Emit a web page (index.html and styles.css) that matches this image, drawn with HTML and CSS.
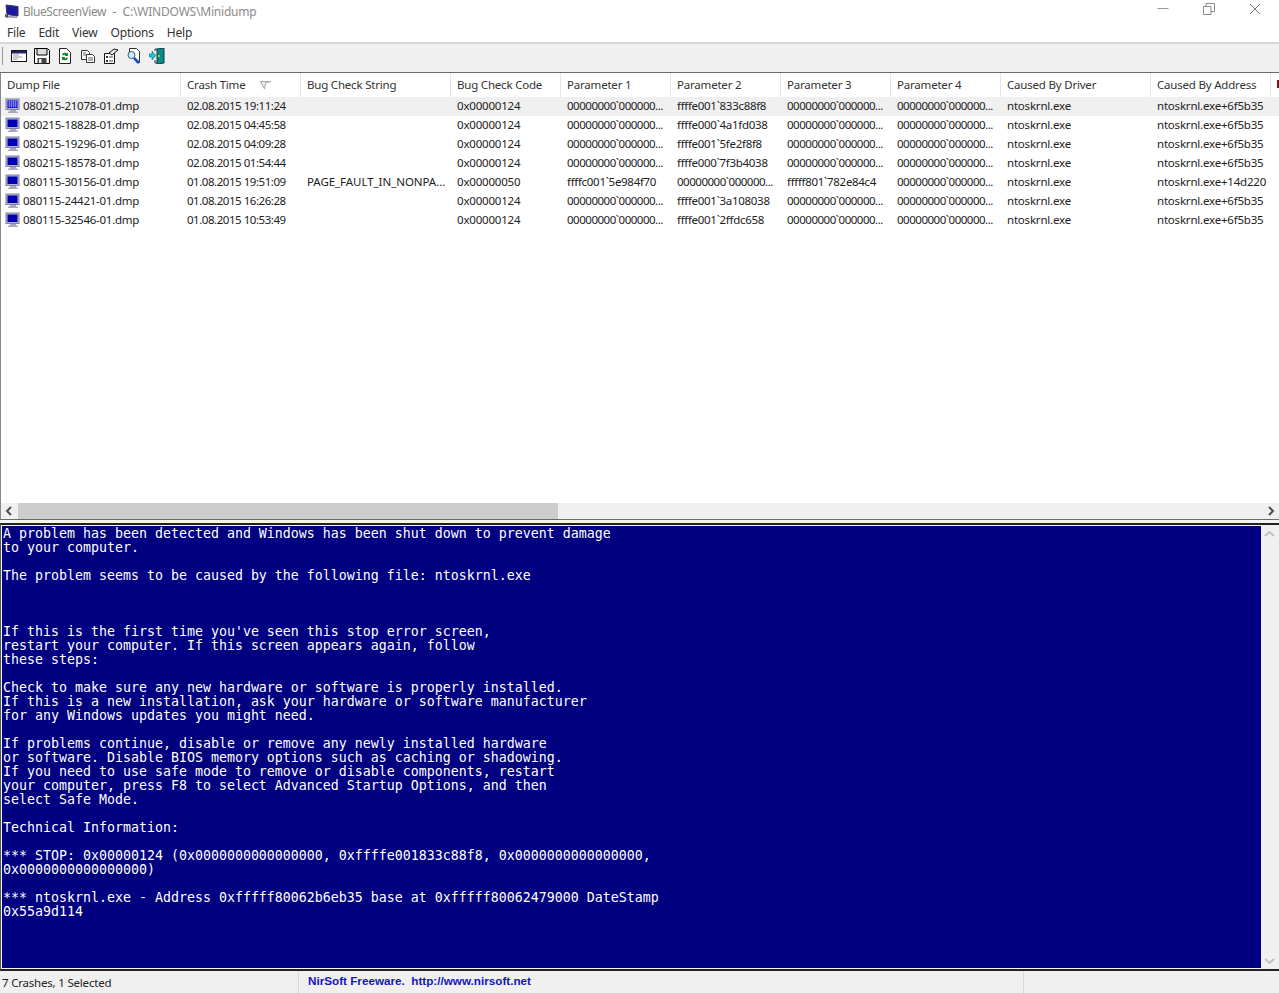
FILE: index.html
```html
<!DOCTYPE html>
<html lang="en">
<head>
    <meta charset="UTF-8">
    <title>BlueScreenView - C:\WINDOWS\Minidump</title>
    <link rel="stylesheet" href="styles.css">
</head>
<body>
<svg class="defs" width="0" height="0">
    <symbol id="monitor" viewBox="0 0 16 16">
        <rect x="1" y="1" width="13" height="10.500" fill="#b4b4d4" stroke="#8080a0"/>
        <rect x="2.500" y="2.500" width="10" height="7.500" fill="#0000b0"/>
        <path d="M5 12h6v1.500h2v1.500h-10v-1.500h2z" fill="#a8a8c0"/>
    </symbol>
    <symbol id="monitor-sel" viewBox="0 0 16 16">
        <rect x="1" y="1" width="13" height="10.500" fill="#b4b4d4" stroke="#8080a0"/>
        <rect x="2.500" y="2.500" width="10" height="7.500" fill="#0000c8"/>
        <path d="M3 4h9M3 6h9M3 8h9M4.500 2.500v7M6.500 2.500v7M8.500 2.500v7M10.500 2.500v7" stroke="#7a7af0"/>
        <path d="M5 12h6v1.500h2v1.500h-10v-1.500h2z" fill="#a8a8c0"/>
    </symbol>
</svg>

<div class="app">
    <div class="titlebar">
        <svg class="app-icon" width="17" height="17" viewBox="0 0 17 17">
            <path d="M3 2l12 1.500v9.500l-11-1.500z" fill="#1a1a9a" stroke="#31316e"/>
            <path d="M2 11l3 1v3l-3-1z" fill="#555"/>
            <path d="M5 13l9 .5v1.500l-9-.5z" fill="#8c8ca8"/>
        </svg>
        <span class="title-text"><span class="app-name">BlueScreenView</span>&nbsp; -&nbsp; C:\WINDOWS\Minidump</span>
        <div class="win-buttons">
            <svg width="12" height="12" viewBox="0 0 12 12"><path d="M0.500 5.500h11" stroke="#9a9a9a"/></svg>
            <svg width="12" height="12" viewBox="0 0 12 12"><path d="M.5 3.500h7.500v8h-7.500zM3 3.500v-3h8.500v8h-3.500" fill="none" stroke="#8a8a8a"/></svg>
            <svg width="12" height="12" viewBox="0 0 12 12"><path d="M1 1l10 10M11 1l-10 10" stroke="#7a7a7a"/></svg>
        </div>
    </div>

    <div class="menubar">
        <span>File</span><span>Edit</span><span>View</span><span>Options</span><span>Help</span>
    </div>

    <div class="toolbar">
        <div class="grip"></div>
        <svg width="16" height="16" viewBox="0 0 16 16"><rect x=".5" y="2.500" width="15" height="11" fill="#fff" stroke="#111"/><rect x="1" y="3" width="14" height="2.500" fill="#22226a"/><path d="M2 7h6M2 9h9M2 11h5" stroke="#999"/></svg>
        <svg width="16" height="16" viewBox="0 0 16 16"><path d="M.5 .5h13l2 2v13h-15z" fill="#fff" stroke="#000"/><path d="M3 1v6h10v-6" fill="#ddd" stroke="#000"/><rect x="3.500" y="10" width="9" height="5.500" fill="#444"/><rect x="5" y="11" width="2.500" height="4" fill="#eee"/></svg>
        <svg width="16" height="16" viewBox="0 0 16 16"><path d="M2.500 .5h7l4 4v11h-11z" fill="#fff" stroke="#222"/><path d="M5 7a3 3 0 0 1 5-1.500l1-1v3.500h-3.500l1-1a2 2 0 0 0-2.500 .5z" fill="#0a8a2a"/><path d="M11 10a3 3 0 0 1-5 1.500l-1 1v-3.500h3.500l-1 1a2 2 0 0 0 2.500-.5z" fill="#0a8a2a"/></svg>
        <svg width="16" height="16" viewBox="0 0 16 16"><path d="M1.500 2.500h6l2 2v7h-8z" fill="#fff" stroke="#333"/><path d="M6.500 6.500h6l2 2v6h-8z" fill="#fff" stroke="#333"/><path d="M3 5h3M3 7h3M8 10h5M8 12h5" stroke="#666"/></svg>
        <svg width="16" height="16" viewBox="0 0 16 16"><path d="M1.500 5.500h10v10h-10z" fill="#fff" stroke="#111"/><path d="M3 8h2v2h-2zM3 12h2v2h-2z" fill="#333"/><path d="M6 9h4M6 13h4" stroke="#444"/><path d="M6 5l5-4 4 1-6 5z" fill="#e8e8e8" stroke="#111"/></svg>
        <svg width="16" height="16" viewBox="0 0 16 16"><path d="M3.500 .5h7l3 3v11h-3" fill="#fff" stroke="#333"/><path d="M3.500 .5v6" stroke="#333"/><circle cx="5.500" cy="7" r="3.500" fill="#cfeefc" stroke="#2a5a8a"/><path d="M8 10l5 5" stroke="#1a4ac8" stroke-width="2.500"/></svg>
        <svg width="16" height="16" viewBox="0 0 16 16"><path d="M8 1l7-1v15l-7 1z" fill="#0a8a8a" stroke="#063e3e"/><path d="M8 1h-2v2M8 15h-2v-3" fill="none" stroke="#333"/><path d="M0 6h3v-3l4 4.500-4 4.500v-3h-3z" fill="#17c8d8" stroke="#0a5a6a" stroke-width=".5"/><circle cx="10" cy="8" r="1" fill="#fc0"/></svg>
    </div>

    <div class="list">
        <div class="list-scroll">
            <table class="dump-table">
                <colgroup>
                    <col class="w180"><col class="w120"><col class="w150"><col class="w110"><col class="w110"><col class="w110"><col class="w110"><col class="w110"><col class="w150"><col class="w120"><col class="w8">
                </colgroup>
                <thead>
                    <tr>
                        <th>Dump File</th>
                        <th>Crash Time<svg class="sort" width="11" height="9" viewBox="0 0 11 9"><path d="M.5 .5h10l-5 1.500-1 6z" fill="#eee" stroke="#a8a8a8"/></svg></th>
                        <th>Bug Check String</th>
                        <th>Bug Check Code</th>
                        <th>Parameter 1</th>
                        <th>Parameter 2</th>
                        <th>Parameter 3</th>
                        <th>Parameter 4</th>
                        <th>Caused By Driver</th>
                        <th>Caused By Address</th>
                        <th class="cut"><div class="cut-mark"></div></th>
                    </tr>
                </thead>
                <tbody>
                    <tr class="selected">
                        <td class="file"><svg width="16" height="16"><use href="#monitor-sel"/></svg>080215-21078-01.dmp</td>
                        <td>02.08.2015 19:11:24</td><td></td><td>0x00000124</td>
                        <td class="zeros">00000000`000000...</td><td>ffffe001`833c88f8</td><td class="zeros">00000000`000000...</td><td class="zeros">00000000`000000...</td>
                        <td>ntoskrnl.exe</td><td>ntoskrnl.exe+6f5b35</td><td></td>
                    </tr>
                    <tr>
                        <td class="file"><svg width="16" height="16"><use href="#monitor"/></svg>080215-18828-01.dmp</td>
                        <td>02.08.2015 04:45:58</td><td></td><td>0x00000124</td>
                        <td class="zeros">00000000`000000...</td><td>ffffe000`4a1fd038</td><td class="zeros">00000000`000000...</td><td class="zeros">00000000`000000...</td>
                        <td>ntoskrnl.exe</td><td>ntoskrnl.exe+6f5b35</td><td></td>
                    </tr>
                    <tr>
                        <td class="file"><svg width="16" height="16"><use href="#monitor"/></svg>080215-19296-01.dmp</td>
                        <td>02.08.2015 04:09:28</td><td></td><td>0x00000124</td>
                        <td class="zeros">00000000`000000...</td><td>ffffe001`5fe2f8f8</td><td class="zeros">00000000`000000...</td><td class="zeros">00000000`000000...</td>
                        <td>ntoskrnl.exe</td><td>ntoskrnl.exe+6f5b35</td><td></td>
                    </tr>
                    <tr>
                        <td class="file"><svg width="16" height="16"><use href="#monitor"/></svg>080215-18578-01.dmp</td>
                        <td>02.08.2015 01:54:44</td><td></td><td>0x00000124</td>
                        <td class="zeros">00000000`000000...</td><td>ffffe000`7f3b4038</td><td class="zeros">00000000`000000...</td><td class="zeros">00000000`000000...</td>
                        <td>ntoskrnl.exe</td><td>ntoskrnl.exe+6f5b35</td><td></td>
                    </tr>
                    <tr>
                        <td class="file"><svg width="16" height="16"><use href="#monitor"/></svg>080115-30156-01.dmp</td>
                        <td>01.08.2015 19:51:09</td><td>PAGE_FAULT_IN_NONPA...</td><td>0x00000050</td>
                        <td>ffffc001`5e984f70</td><td class="zeros">00000000`000000...</td><td>fffff801`782e84c4</td><td class="zeros">00000000`000000...</td>
                        <td>ntoskrnl.exe</td><td>ntoskrnl.exe+14d220</td><td></td>
                    </tr>
                    <tr>
                        <td class="file"><svg width="16" height="16"><use href="#monitor"/></svg>080115-24421-01.dmp</td>
                        <td>01.08.2015 16:26:28</td><td></td><td>0x00000124</td>
                        <td class="zeros">00000000`000000...</td><td>ffffe001`3a108038</td><td class="zeros">00000000`000000...</td><td class="zeros">00000000`000000...</td>
                        <td>ntoskrnl.exe</td><td>ntoskrnl.exe+6f5b35</td><td></td>
                    </tr>
                    <tr>
                        <td class="file"><svg width="16" height="16"><use href="#monitor"/></svg>080115-32546-01.dmp</td>
                        <td>01.08.2015 10:53:49</td><td></td><td>0x00000124</td>
                        <td class="zeros">00000000`000000...</td><td>ffffe001`2ffdc658</td><td class="zeros">00000000`000000...</td><td class="zeros">00000000`000000...</td>
                        <td>ntoskrnl.exe</td><td>ntoskrnl.exe+6f5b35</td><td></td>
                    </tr>
                </tbody>
            </table>
        </div>
        <div class="hscroll">
            <svg class="arrow" width="17" height="16" viewBox="0 0 17 16"><path d="M10 4l-4 4 4 4" fill="none" stroke="#505050" stroke-width="2"/></svg>
            <div class="hscroll-thumb"></div>
            <div class="hscroll-track"></div>
            <svg class="arrow" width="17" height="16" viewBox="0 0 17 16"><path d="M7 4l4 4-4 4" fill="none" stroke="#505050" stroke-width="2"/></svg>
        </div>
    </div>

    <div class="splitter"></div>

    <div class="lower">
<pre class="bsod">A problem has been detected and Windows has been shut down to prevent damage
to your computer.

The problem seems to be caused by the following file: ntoskrnl.exe



If this is the first time you've seen this stop error screen,
restart your computer. If this screen appears again, follow
these steps:

Check to make sure any new hardware or software is properly installed.
If this is a new installation, ask your hardware or software manufacturer
for any Windows updates you might need.

If problems continue, disable or remove any newly installed hardware
or software. Disable BIOS memory options such as caching or shadowing.
If you need to use safe mode to remove or disable components, restart
your computer, press F8 to select Advanced Startup Options, and then
select Safe Mode.

Technical Information:

*** STOP: 0x00000124 (0x0000000000000000, 0xffffe001833c88f8, 0x0000000000000000,
0x0000000000000000)

*** ntoskrnl.exe - Address 0xfffff80062b6eb35 base at 0xfffff80062479000 DateStamp
0x55a9d114</pre>
        <div class="vscroll">
            <svg width="17" height="14" viewBox="0 0 17 14"><path d="M4 9l4.500-4 4.500 4" fill="none" stroke="#c0c0c0" stroke-width="2"/></svg>
            <svg width="17" height="14" viewBox="0 0 17 14"><path d="M4 5l4.500 4 4.500-4" fill="none" stroke="#c0c0c0" stroke-width="2"/></svg>
        </div>
    </div>

    <div class="statusbar">
        <div class="status-count">7 Crashes, 1 Selected</div>
        <div class="status-link"><span>NirSoft Freeware.&nbsp; http://www.nirsoft.net</span></div>
        <div class="status-rest"></div>
    </div>
</div>
</body>
</html>
```

FILE: styles.css
```css
html, body {
    margin: 0;
    padding: 0;
}
body {
    font-family: "Noto Sans", "Open Sans", sans-serif;
    font-size: 11.5px;
    letter-spacing: -0.2px;
    color: #1c1c1c;
    background-color: #fff;
    overflow: hidden;
}
.defs {
    display: block;
    height: 0;
}
.app {
    display: flex;
    flex-direction: column;
    width: 1279px;
    height: 993px;
    overflow: hidden;
}

/* title + menu */
.titlebar {
    display: flex;
    align-items: center;
    height: 22px;
    flex: none;
    padding-left: 3px;
}
.app-icon {
    margin-right: 3px;
}
.title-text {
    color: #8a8a8a;
    font-size: 12px;
    word-spacing: 0.3px;
}
.app-name {
    letter-spacing: -0.45px;
}
.win-buttons {
    display: flex;
    gap: 34px;
    margin-left: auto;
    margin-right: 18px;
    margin-top: -4px;
}
.menubar {
    display: flex;
    gap: 13px;
    align-items: center;
    height: 20px;
    flex: none;
    padding-left: 7px;
    color: #333;
    font-size: 12px;
}

/* toolbar */
.toolbar {
    display: flex;
    align-items: center;
    gap: 7px;
    height: 24px;
    flex: none;
    padding-left: 2px;
    padding-bottom: 4px;
    background-color: #f0f0f0;
    border-top: 2px solid #d8d8d8;
    border-bottom: 1px solid #6a6a6a;
}
.grip {
    width: 1px;
    height: 18px;
    border-left: 1px solid #9a9a9a;
}

/* crash list */
.list {
    display: flex;
    flex-direction: column;
    height: 446px;
    flex: none;
    border-left: 1px solid #8a8a8a;
}
.list-scroll {
    flex: 1;
    overflow: hidden;
}
.dump-table {
    table-layout: fixed;
    border-collapse: separate;
    border-spacing: 0;
    width: 1278px;
}
.w180 { width: 180px; }
.w120 { width: 120px; }
.w150 { width: 150px; }
.w110 { width: 110px; }
.w8 { width: 8px; }
.dump-table th {
    height: 24px;
    box-sizing: border-box;
    padding: 0 0 2px 6px;
    font-weight: normal;
    text-align: left;
    color: #333;
    border-right: 1px solid #e5e5e5;
    white-space: nowrap;
    overflow: hidden;
}
.dump-table th.cut {
    border-right: none;
}
.cut-mark {
    width: 2px;
    height: 8px;
    background-color: #7a1428;
}
.sort {
    margin-left: 15px;
    vertical-align: -1px;
}
.dump-table td {
    height: 19px;
    box-sizing: border-box;
    padding: 0 0 1px 6px;
    line-height: 16px;
    white-space: nowrap;
    overflow: hidden;
    color: #222;
}
.dump-table td:nth-child(2) {
    letter-spacing: -0.46px;
}
.dump-table td:nth-child(3) {
    letter-spacing: -0.05px;
}
.dump-table td:nth-child(5),
.dump-table td:nth-child(6),
.dump-table td:nth-child(7) {
    letter-spacing: -0.3px;
}
.dump-table td.zeros {
    letter-spacing: -0.48px;
}
.dump-table td.file {
    padding-left: 4px;
    letter-spacing: -0.25px;
}
.file svg {
    float: left;
    margin-right: 2px;
}
.selected td {
    background-color: #f0f0f0;
}

.hscroll {
    display: flex;
    height: 16px;
    flex: none;
    background-color: #f0f0f0;
}
.arrow {
    flex: none;
}
.hscroll-thumb {
    width: 540px;
    background-color: #cdcdcd;
}
.hscroll-track {
    flex: 1;
}
.splitter {
    height: 3px;
    flex: none;
    border-top: 1px solid #6a6a6a;
    background-color: #f4f4f4;
}

/* bsod text */
.lower {
    display: flex;
    height: 448px;
    flex: none;
    border-top: 2px solid #222;
    border-left: 1px solid #555;
    border-bottom: 2px solid #222;
    box-sizing: border-box;
    background-color: #f0f0f0;
}
.bsod {
    flex: 1;
    margin: 0;
    padding: 1px 0 0 1px;
    border: 1px solid #f4f4f4;
    border-right: none;
    background-color: #000080;
    color: #fff;
    font-family: "DejaVu Sans Mono", "Liberation Mono", monospace;
    font-size: 13.29px;
    letter-spacing: 0;
    line-height: 14px;
    overflow: hidden;
}
.vscroll {
    display: flex;
    flex-direction: column;
    justify-content: space-between;
    width: 18px;
    flex: none;
    padding-top: 2px;
    padding-bottom: 1px;
    box-sizing: border-box;
}

/* status bar */
.statusbar {
    display: flex;
    flex: 1;
    background-color: #f0f0f0;
}
.status-count {
    width: 298px;
    flex: none;
    padding: 4px 0 0 2px;
    box-sizing: border-box;
    color: #222;
}
.status-link {
    width: 726px;
    flex: none;
    padding-left: 9px;
    box-sizing: border-box;
    border-left: 1px solid #d8d8d8;
    border-right: 1px solid #d8d8d8;
    color: #1414c8;
    font-family: "Liberation Sans", Arial, sans-serif;
    font-size: 11.7px;
    font-weight: bold;
    letter-spacing: 0;
    line-height: 19px;
}
.status-rest {
    flex: 1;
}
```
